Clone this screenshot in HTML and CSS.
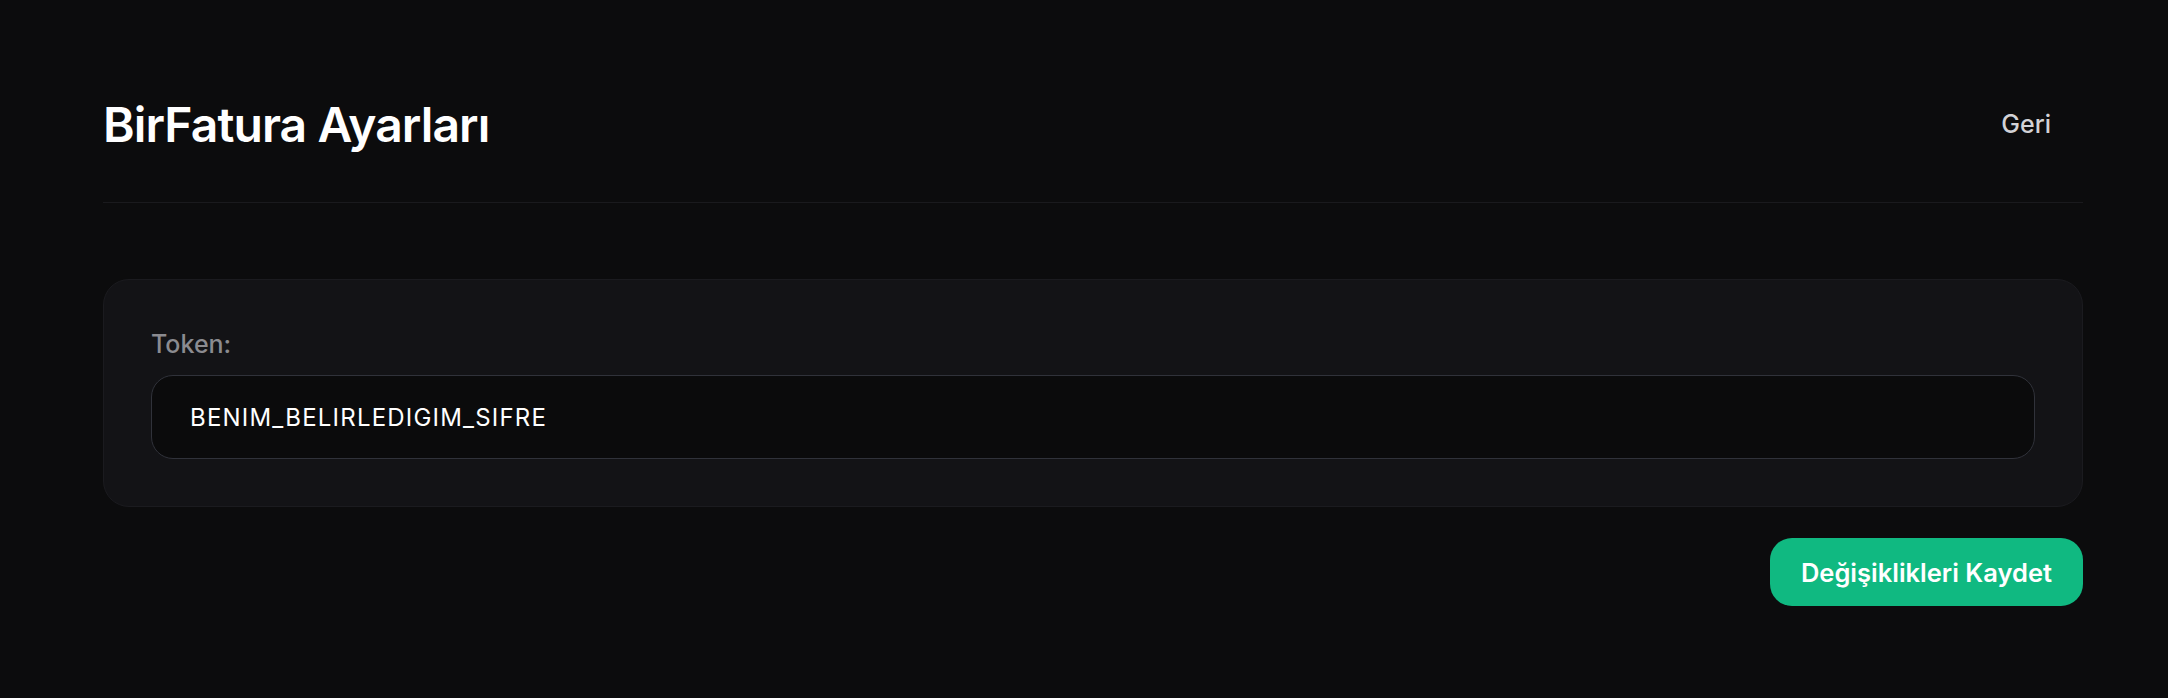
FILE: index.html
```html
<!DOCTYPE html>
<html lang="tr">
<head>
<meta charset="utf-8">
<title>BirFatura Ayarları</title>
<link rel="stylesheet" href="styles.css">
</head>
<body>
<main class="page">
  <header class="header">
    <h1 class="title">BirFatura Ayarları</h1>
    <button class="back" type="button">Geri</button>
  </header>
  <section class="card">
    <label class="label" for="token">Token:</label>
    <input id="token" class="input" type="text" value="BENIM_BELIRLEDIGIM_SIFRE">
  </section>
  <div class="actions">
    <button class="save" type="button">Değişiklikleri Kaydet</button>
  </div>
</main>
</body>
</html>
```
FILE: styles.css
```css
* { box-sizing: border-box; }
html, body {
  margin: 0;
  background: #0c0c0d;
  font-family: Inter, "Noto Sans", sans-serif;
  color: #fff;
}
.page {
  padding: 96px 85px 0 103px;
}
.header {
  display: flex;
  justify-content: space-between;
  align-items: center;
  padding-bottom: 48px;
  border-bottom: 1px solid #1a1a1d;
}
.title {
  margin: 0;
  font-size: 48px;
  line-height: 1.2;
  font-weight: 600;
  letter-spacing: -0.9px;
  color: #fff;
}
.back {
  background: transparent;
  border: 0;
  color: #d2d2d6;
  font-family: inherit;
  font-size: 25px;
  font-weight: 500;
  padding: 10px 32px;
  line-height: 1.4;
}
.card {
  margin-top: 76px;
  background: #131316;
  border: 1px solid #1b1b1f;
  border-radius: 26px;
  padding: 46px 47px 47px 47px;
  display: flex;
  flex-direction: column;
}
.label {
  font-size: 25px;
  line-height: 1.5;
  font-weight: 500;
  color: #8b8b90;
  margin-bottom: 12px;
}
.input {
  height: 84px;
  width: 100%;
  background: #0b0b0c;
  border: 1.5px solid #30323a;
  border-radius: 22px;
  padding: 0 38px;
  color: #fff;
  font-family: inherit;
  font-size: 24px;
  letter-spacing: 1.2px;
  outline: none;
}
.actions {
  display: flex;
  justify-content: flex-end;
  margin-top: 31px;
}
.save {
  height: 68px;
  padding: 0 31px;
  background: #10b981;
  color: #fff;
  border: 0;
  border-radius: 22px;
  font-family: inherit;
  font-size: 25.5px;
  font-weight: 600;
}
```
